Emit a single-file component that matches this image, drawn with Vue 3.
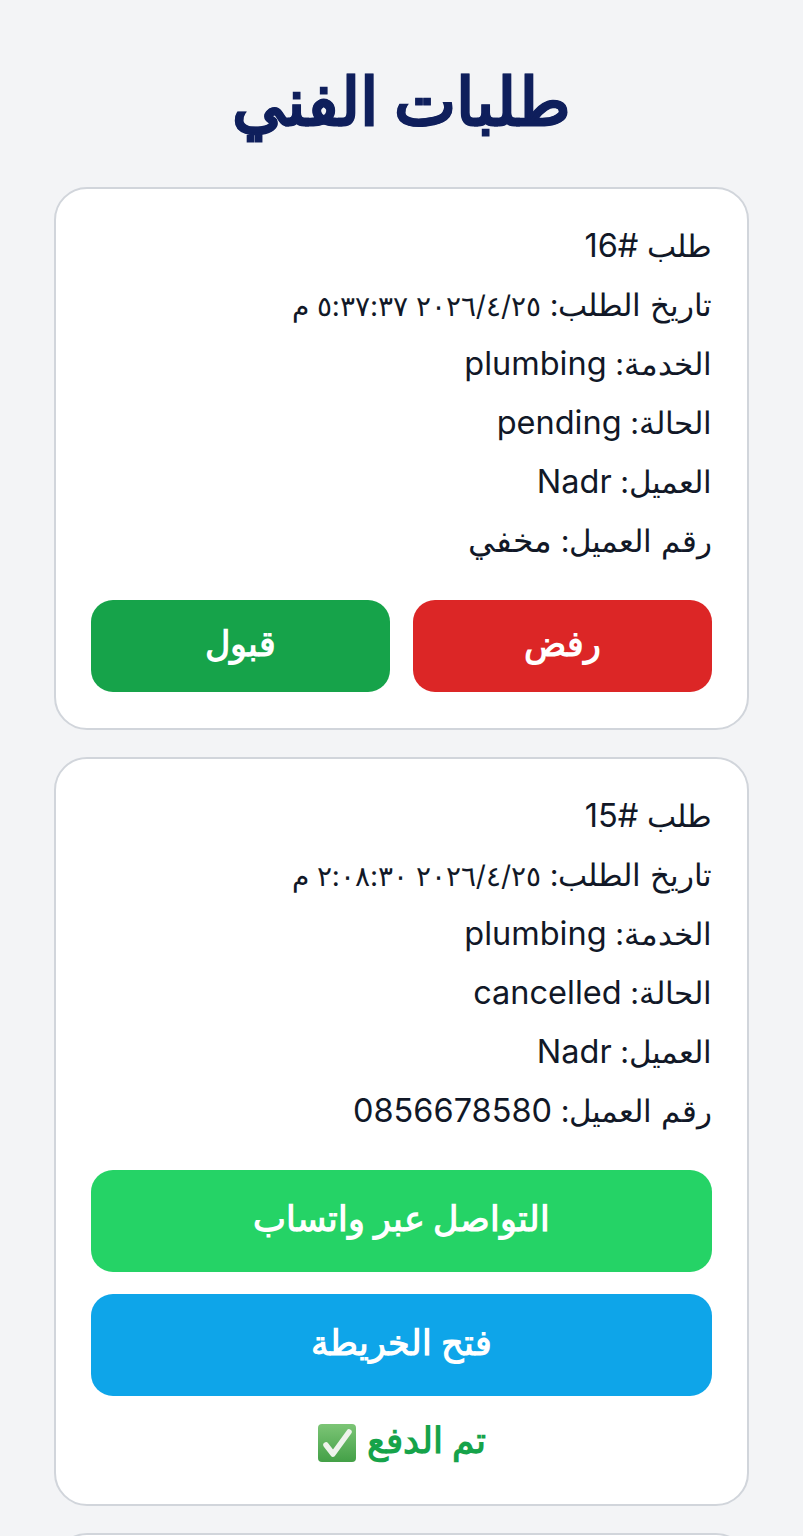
<script setup>
const orders = [
  {
    id: 16,
    date: "٢٠٢٦/٤/٢٥ ٥:٣٧:٣٧ م",
    service: "plumbing",
    status: "pending",
    client: "Nadr",
    phone: "مخفي",
  },
  {
    id: 15,
    date: "٢٠٢٦/٤/٢٥ ٢:٠٨:٣٠ م",
    service: "plumbing",
    status: "cancelled",
    client: "Nadr",
    phone: "0856678580",
  },
];
</script>

<template>
  <div class="page" dir="rtl">
    <h1 class="title">طلبات الفني</h1>
    <div v-for="o in orders" :key="o.id" class="card">
      <div class="info">
        <p>طلب <span class="val">#{{ o.id }}</span></p>
        <p>تاريخ الطلب: <span class="date">{{ o.date }}</span></p>
        <p>الخدمة: <span class="val">{{ o.service }}</span></p>
        <p>الحالة: <span class="val">{{ o.status }}</span></p>
        <p>العميل: <span class="val">{{ o.client }}</span></p>
        <p>رقم العميل: <span class="val">{{ o.phone }}</span></p>
      </div>
      <div v-if="o.status === 'pending'" class="row">
        <button class="btn red">رفض</button>
        <button class="btn green">قبول</button>
      </div>
      <div v-else class="stack">
        <button class="btn tall whatsapp">التواصل عبر واتساب</button>
        <button class="btn tall blue">فتح الخريطة</button>
        <div class="paid">
          <span>تم الدفع</span>
          <svg width="40" height="40" viewBox="0 0 40 40" aria-hidden="true">
            <defs>
              <linearGradient id="chk" x1="0" y1="0" x2="0" y2="1">
                <stop offset="0" stop-color="#7cc576" />
                <stop offset="1" stop-color="#43a047" />
              </linearGradient>
            </defs>
            <rect x="1" y="1" width="38" height="38" rx="4" fill="url(#chk)" />
            <path d="M9 22l7 9L32 9" fill="none" stroke="#eef3ec" stroke-width="5.5" stroke-linecap="round" stroke-linejoin="round" />
          </svg>
        </div>
      </div>
    </div>
    <div class="card"></div>
  </div>
</template>

<style>
html,
body {
  margin: 0;
  background: #f3f4f6;
  overflow: hidden;
}
</style>

<style scoped>
.page {
  height: 1536px;
  overflow: hidden;
  box-sizing: border-box;
  padding: 54px 54px 0;
  background: #f3f4f6;
  font-family: Inter, serif;
  color: #111827;
}

.title {
  margin: 0;
  padding-top: 4px;
  height: 129px;
  text-align: center;
  font-family: "Liberation Serif", serif;
  font-size: 66px;
  line-height: 89px;
  font-weight: 700;
  color: #0f1f5c;
  -webkit-text-stroke: 0.8px #0f1f5c;
}

.card {
  box-sizing: border-box;
  background: #fff;
  border: 2px solid #d1d5db;
  border-radius: 33px;
  padding: 36px 35px;
  margin-bottom: 27px;
}

.info {
  margin-top: -9px;
}

.info p {
  margin: 0;
  font-size: 30.5px;
  line-height: 59px;
}

.val {
  font-size: 32.5px;
  line-height: 1;
}

.date {
  font-size: 28px;
  line-height: 1;
}

.row {
  display: flex;
  gap: 23px;
  margin-top: 30px;
}

.row .btn {
  flex: 1;
  height: 92px;
}

.stack {
  display: flex;
  flex-direction: column;
  gap: 22px;
  margin-top: 30px;
}

.btn {
  border: none;
  border-radius: 22px;
  color: #fff;
  font-family: "Liberation Serif", serif;
  font-size: 34.5px;
  font-weight: 700;
  padding: 0 0 5px;
}

.tall {
  height: 102px;
}

.red {
  background: #dc2626;
}

.green {
  background: #16a34a;
}

.whatsapp {
  background: #25d366;
}

.blue {
  background: #0ea5e9;
}

.paid {
  display: flex;
  justify-content: center;
  align-items: center;
  gap: 10px;
  height: 50px;
  color: #16a34a;
  font-family: "Liberation Serif", serif;
  font-size: 36px;
  font-weight: 700;
}

.paid span {
  margin-top: -5px;
}
</style>
